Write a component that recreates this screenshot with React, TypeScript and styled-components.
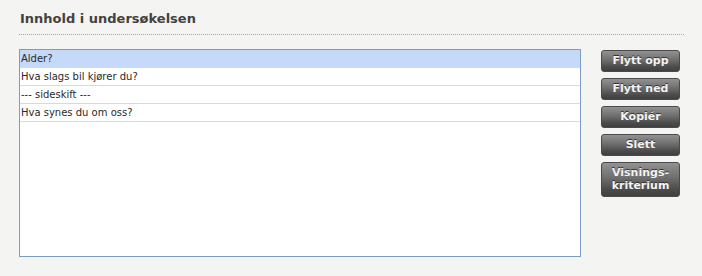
import styled, { createGlobalStyle } from 'styled-components'

const GlobalStyle = createGlobalStyle`
    html, body {
        margin: 0;
        padding: 0;
        background: #f4f4f2;
    }
    body {
        font-family: "DejaVu Sans", Verdana, sans-serif;
    }
`;

type Item = { label: string; selected?: boolean }

const items: Item[] = [
    { label: 'Alder?', selected: true },
    { label: 'Hva slags bil kjører du?' },
    { label: '--- sideskift ---' },
    { label: 'Hva synes du om oss?' },
]

const actions = ['Flytt opp', 'Flytt ned', 'Kopiér', 'Slett', 'Visnings-\nkriterium']

const App = () => {
    return (
        <>
            <GlobalStyle />
            <Page>
                <Heading>Innhold i undersøkelsen</Heading>
                <Content>
                    <ItemList>
                        {items.map((item) => (
                            <Row key={item.label} $selected={item.selected}>
                                {item.label}
                            </Row>
                        ))}
                    </ItemList>
                    <Actions>
                        {actions.map((label) => (
                            <ActionButton key={label}>{label}</ActionButton>
                        ))}
                    </Actions>
                </Content>
            </Page>
        </>
    )
}

const Page = styled.div`
    width: 665px;
    padding: 0 0 0 19px;
`;

const Heading = styled.h2`
    margin: 0;
    padding: 9px 0 6px 1px;
    font-size: 13px;
    line-height: 19px;
    font-weight: bold;
    color: #444240;
    border-bottom: 1px dotted #a9a9a5;
`;

const Content = styled.div`
    display: flex;
    align-items: flex-start;
    gap: 20px;
    margin-top: 14px;
`;

const ItemList = styled.div`
    box-sizing: border-box;
    width: 562px;
    height: 208px;
    background: #ffffff;
    border: 1px solid #7b9dc2;
`;

const Row = styled.div<{ $selected?: boolean }>`
    height: 17px;
    padding-left: 1px;
    font-size: 10px;
    line-height: 18px;
    color: #2a2a2a;
    background: ${(p) => (p.$selected ? '#c5d9fb' : '#ffffff')};
    border-bottom: 1px solid #d9d9d9;
`;

const Actions = styled.div`
    display: flex;
    flex-direction: column;
    gap: 6px;
    padding-top: 1px;
`;

const ActionButton = styled.button`
    box-sizing: border-box;
    width: 79px;
    min-height: 22px;
    padding: 3px 2px 4px;
    border: 1px solid #4a4a4a;
    border-radius: 3px;
    background: linear-gradient(to bottom, #929292 0%, #6e6e6e 45%, #4b4b4b 80%, #404040 100%);
    color: #f4f4f4;
    font-family: "DejaVu Sans", Verdana, sans-serif;
    font-size: 11px;
    font-weight: bold;
    line-height: 13px;
    white-space: pre-line;
    text-shadow: 0 -1px 0 #333;
    cursor: pointer;
`;

export default App
